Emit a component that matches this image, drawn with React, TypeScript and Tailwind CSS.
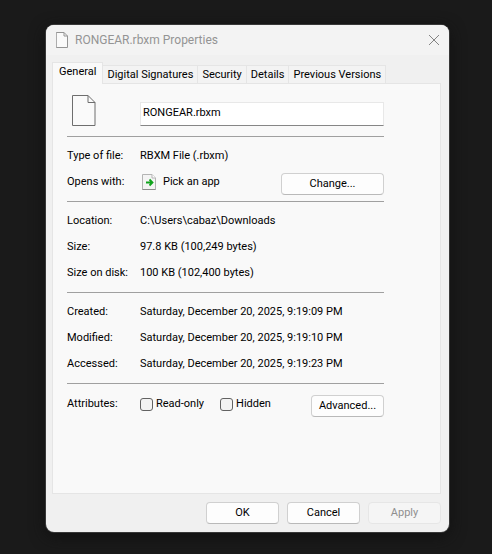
import type { ButtonHTMLAttributes, ReactNode } from "react";
import { clsx } from "clsx";

const tabs = ["General", "Digital Signatures", "Security", "Details", "Previous Versions"];

const sizeRows = [
    { label: "Location:", value: "C:\\Users\\cabaz\\Downloads" },
    { label: "Size:", value: "97.8 KB (100,249 bytes)" },
    { label: "Size on disk:", value: "100 KB (102,400 bytes)" },
];

const dateRows = [
    { label: "Created:", value: "Saturday, December 20, 2025, 9:19:09 PM" },
    { label: "Modified:", value: "Saturday, December 20, 2025, 9:19:10 PM" },
    { label: "Accessed:", value: "Saturday, December 20, 2025, 9:19:23 PM" },
];

function FileIcon({ className }: { className?: string }) {
    return (
        <svg viewBox="0 0 24 31" fill="none" stroke="currentColor" className={className} aria-hidden="true">
            <path d="M.5.5h15.500l7 7v23H.5z" fill="#fafafa" vectorEffect="non-scaling-stroke" />
            <path d="M16 .5v7h7" vectorEffect="non-scaling-stroke" />
        </svg>
    );
}

function AppIcon() {
    return (
        <svg viewBox="0 0 14 16" className="h-4 w-[14px]" aria-hidden="true">
            <path d="M.5.5h9.500l3.500 3.500v11.500H.5z" fill="#f4f4f4" stroke="#b4b4b4" />
            <path d="M.5 15.500h13" stroke="#8c8c8c" />
            <path d="M10 .5v3.500h3.500" fill="#fff" stroke="#b4b4b4" />
            <path d="M4 8.500h6M7.500 5.500l3 3-3 3" fill="none" stroke="#10a31c" strokeWidth="1.800" />
        </svg>
    );
}

function DialogButton({ className, ...props }: ButtonHTMLAttributes<HTMLButtonElement>) {
    return (
        <button
            type="button"
            className={clsx(
                "h-[22px] rounded-[4px] border border-[#d0d0d0] border-b-[#b9b9b9] bg-[#fdfdfd] text-center leading-5 disabled:border-[#e6e6e6] disabled:bg-[#f5f5f5] disabled:text-[#8f8f8f]",
                className,
            )}
            {...props}
        />
    );
}

function Row({ label, children }: { label: string; children: ReactNode }) {
    return (
        <div className="flex h-[26px] items-center">
            <dt className="w-[73px] shrink-0">{label}</dt>
            <dd className="flex h-full min-w-0 flex-1 items-center whitespace-nowrap">{children}</dd>
        </div>
    );
}

function Check({ id, label }: { id: string; label: string }) {
    return (
        <label htmlFor={id} className="flex items-center gap-[3px]">
            <input
                id={id}
                type="checkbox"
                className="size-[13px] appearance-none rounded-[3px] border border-[#626262] bg-[#f3f3f3] checked:bg-[#0067c0]"
            />
            {label}
        </label>
    );
}

export default function App() {
    return (
        <main className="flex min-h-screen flex-col bg-[#1a1a1a] pt-[25px] pr-[43px] pb-[22px] pl-[46px] font-['Roboto','Liberation_Sans',sans-serif] text-[11px] leading-4 text-black">
            <section
                role="dialog"
                aria-label="RONGEAR.rbxm Properties"
                className="flex flex-1 flex-col overflow-hidden rounded-lg bg-[#f0f0f0] shadow-[0_0_0_1px_#383838,0_4px_16px_#101010]"
            >
                <header className="flex h-[30px] items-center bg-[#f3f3f3] pr-2 pl-[10px] text-[#949494]">
                    <FileIcon className="h-4 w-3" />
                    <h1 className="ml-[7px] flex-1 text-[12px]">RONGEAR.rbxm Properties</h1>
                    <button type="button" aria-label="Close" className="flex size-[14px] items-center justify-center">
                        <svg viewBox="0 0 12 12" className="size-3" stroke="#848484" fill="none">
                            <path d="M1 1l10 10M11 1L1 11" />
                        </svg>
                    </button>
                </header>

                <div className="flex flex-1 flex-col pt-[7px] pr-2 pb-2 pl-[6px]">
                    <div role="tablist" className="flex items-end">
                        {tabs.map((tab, i) => (
                            <button
                                key={tab}
                                type="button"
                                role="tab"
                                aria-selected={i === 0}
                                className={clsx(
                                    "border-[#e5e5e5] whitespace-nowrap",
                                    i === 0
                                        ? "z-10 -mb-px h-[22px] border border-b-0 bg-[#f9f9f9] px-[6px] pb-[3px]"
                                        : "h-[18px] border-t border-r bg-[#f3f3f3] px-1",
                                )}
                            >
                                {tab}
                            </button>
                        ))}
                    </div>

                    <div role="tabpanel" className="flex-1 border border-[#e5e5e5] bg-[#f9f9f9] pr-14 pl-[14px]">
                        <div className="flex h-[52px] items-end pb-[10px]">
                            <div className="w-[73px] shrink-0 pl-[5px]">
                                <FileIcon className="h-[31px] w-6 text-[#6e6e6e]" />
                            </div>
                            <input
                                aria-label="File name"
                                defaultValue="RONGEAR.rbxm"
                                className="h-6 min-w-0 flex-1 border border-[#e8e8e8] border-b-[#868686] bg-white px-[2px] pb-[3px] outline-none"
                            />
                        </div>

                        <dl className="border-t border-[#a0a0a0] py-[6px]">
                            <Row label="Type of file:">RBXM File (.rbxm)</Row>
                            <Row label="Opens with:">
                                <span className="flex flex-1 items-center gap-[7px] pl-[2px]">
                                    <AppIcon />
                                    Pick an app
                                </span>
                                <DialogButton className="w-[103px] self-end">Change...</DialogButton>
                            </Row>
                        </dl>
                        <dl className="border-t border-[#a0a0a0] py-[6px]">
                            {sizeRows.map((row) => (
                                <Row key={row.label} label={row.label}>{row.value}</Row>
                            ))}
                        </dl>
                        <dl className="border-t border-[#a0a0a0] py-[6px]">
                            {dateRows.map((row) => (
                                <Row key={row.label} label={row.label}>{row.value}</Row>
                            ))}
                        </dl>
                        <dl className="border-t border-[#a0a0a0] py-[7px]">
                            <Row label="Attributes:">
                                <div className="flex flex-1 items-center gap-4">
                                    <Check id="readonly" label="Read-only" />
                                    <Check id="hidden" label="Hidden" />
                                </div>
                                <DialogButton className="w-[73px] self-end">Advanced...</DialogButton>
                            </Row>
                        </dl>
                    </div>

                    <footer className="flex justify-end gap-2 pt-2">
                        <DialogButton className="w-[73px]">OK</DialogButton>
                        <DialogButton className="w-[73px]">Cancel</DialogButton>
                        <DialogButton className="w-[73px]" disabled>Apply</DialogButton>
                    </footer>
                </div>
            </section>
        </main>
    );
}
